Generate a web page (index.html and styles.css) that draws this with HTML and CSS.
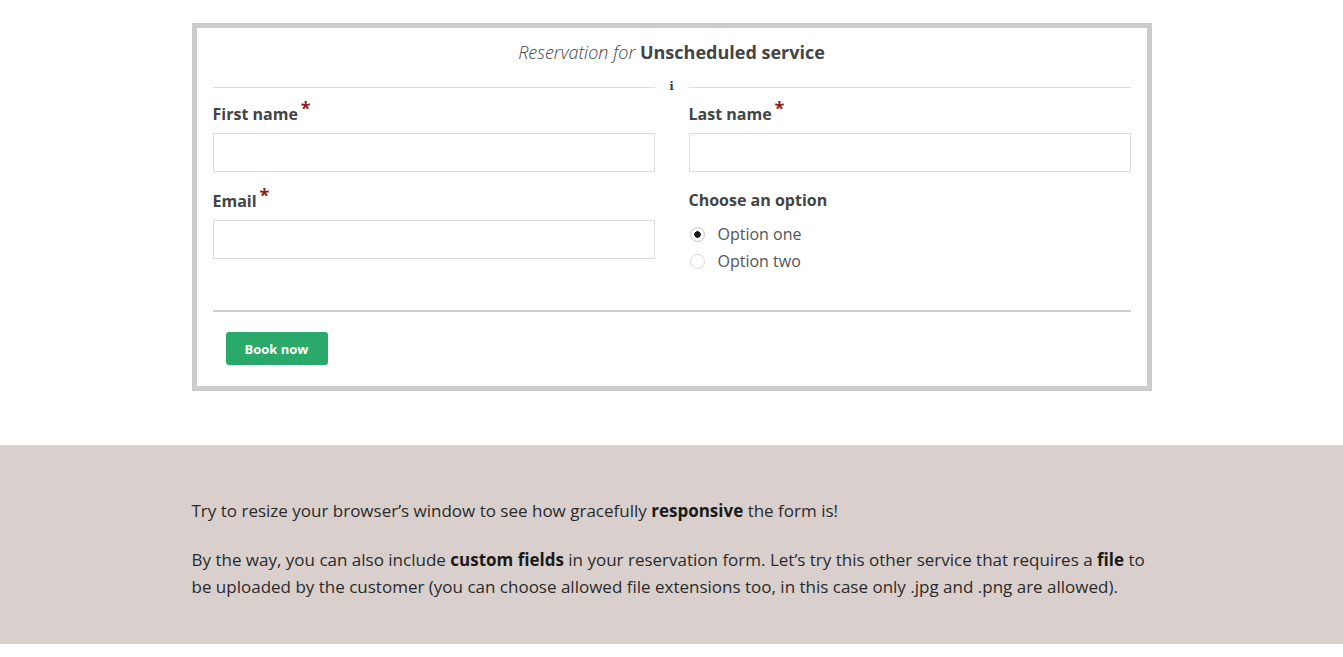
FILE: index.html
```html
<!DOCTYPE html>
<html>
  <head>
    <meta charset="UTF-8">
    <title>Reservation for Unscheduled service</title>
    <link rel="stylesheet" href="styles.css">
  </head>
  <body>
    <div class="page">
      <form class="booking">
        <h2 class="booking-title"><em>Reservation for</em> <strong>Unscheduled service</strong></h2>

        <div class="divider">
          <span class="divider-line"></span>
          <span class="divider-icon">i</span>
          <span class="divider-line"></span>
        </div>

        <div class="fields">
          <div class="field">
            <label for="first-name">First name<span class="required">*</span></label>
            <input type="text" id="first-name">
          </div>
          <div class="field">
            <label for="last-name">Last name<span class="required">*</span></label>
            <input type="text" id="last-name">
          </div>
          <div class="field">
            <label for="email">Email<span class="required">*</span></label>
            <input type="email" id="email">
          </div>
          <div class="field">
            <label>Choose an option</label>
            <div class="options">
              <label class="option"><input type="radio" name="option" checked> Option one</label>
              <label class="option"><input type="radio" name="option"> Option two</label>
            </div>
          </div>
        </div>

        <hr class="booking-rule">

        <button type="button" class="book-button">Book now</button>
      </form>
    </div>

    <section class="notes">
      <div class="page">
        <p>Try to resize your browser’s window to see how gracefully <strong>responsive</strong> the form is!</p>
        <p>By the way, you can also include <strong>custom fields</strong> in your reservation form. Let’s try this other service that requires a <strong>file</strong> to be uploaded by the customer (you can choose allowed file extensions too, in this case only .jpg and .png are allowed).</p>
      </div>
    </section>
  </body>
</html>
```

FILE: styles.css
```css
body {
  margin: 0;
  font-family: "Open Sans", "Liberation Sans", sans-serif;
  color: #444;
  background: #fff;
}

.page {
  width: 960px;
  margin: 0 auto;
}

.booking {
  margin-top: 23px;
  border: 5px solid #cccccc;
  padding: 10px 16px 21px;
}

.booking-title {
  margin: 0;
  text-align: center;
  font-size: 18px;
  line-height: 28px;
  font-weight: normal;
  color: #444;
}

.booking-title em {
  font-weight: 300;
}

.booking-title strong {
  font-weight: 700;
}

.divider {
  display: grid;
  grid-template-columns: 1fr 34px 1fr;
  align-items: center;
  height: 14px;
  margin-top: 14px;
}

.divider-line {
  border-top: 1px solid #dddddd;
}

.divider-icon {
  text-align: center;
  font-family: "DejaVu Serif", serif;
  font-weight: bold;
  font-size: 11px;
  line-height: 14px;
  color: #333;
}

.fields {
  display: grid;
  grid-template-columns: 1fr 1fr;
  column-gap: 34px;
  row-gap: 17px;
  margin-top: 8px;
}

.field > label {
  display: block;
  font-size: 16px;
  line-height: 22px;
  font-weight: 700;
  color: #444;
  margin-bottom: 8px;
}

.required {
  color: #8b1a1a;
  font-size: 18px;
  margin-left: 3px;
  position: relative;
  top: -5px;
}

.field input[type="text"],
.field input[type="email"] {
  display: block;
  box-sizing: border-box;
  width: 100%;
  height: 39px;
  border: 1px solid #dddddd;
  margin: 0;
  padding: 6px 10px;
  font: inherit;
}

.options {
  display: flex;
  flex-direction: column;
  padding-top: 2px;
}

.option {
  display: flex;
  align-items: center;
  gap: 13px;
  font-size: 16px;
  line-height: 27px;
  color: #555;
}

.option input {
  appearance: none;
  width: 15px;
  height: 15px;
  margin: 0 0 0 1px;
  border: 1px solid #d6d6d6;
  border-radius: 50%;
  box-sizing: border-box;
  background: #fff;
}

.option input:checked {
  border-color: #c4c4c4;
  background: radial-gradient(circle, #1a1a1a 0 3px, #fff 3.5px);
}

.booking-rule {
  border: none;
  border-top: 2px solid #cfcfcf;
  margin: 35px 0 20px;
}

.book-button {
  margin-left: 13px;
  width: 102px;
  height: 33px;
  border: none;
  border-radius: 3px;
  background: #2aaa6a;
  color: #fff;
  font-family: "Open Sans", "Liberation Sans", sans-serif;
  font-size: 13px;
  font-weight: 700;
  cursor: pointer;
}

.notes {
  margin-top: 54px;
  background: #d9d0cd;
  padding: 52px 0 44px;
  color: #2a2a2a;
}

.notes p {
  margin: 0 0 22px;
  font-size: 17px;
  line-height: 27px;
}

.notes p:last-child {
  margin-bottom: 0;
}

.notes strong {
  font-weight: 700;
  color: #1a1a1a;
}
```
